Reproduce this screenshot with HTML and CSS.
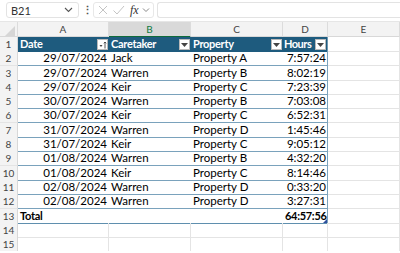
FILE: index.html
```html
<!DOCTYPE html>
<html lang="en">
<head>
  <meta charset="UTF-8" />
  <title>Caretaker Hours</title>
  <link rel="stylesheet" href="styles.css">
</head>
<body>

  <!-- Formula bar -->
  <div class="formula-bar">
    <div class="name-box">
      <span>B21</span>
      <svg width="9" height="6" viewBox="0 0 9 6"><path d="M1 1 L4.5 4.5 L8 1" fill="none" stroke="#555" stroke-width="1.1"/></svg>
    </div>
    <div class="dots">⋮</div>
    <div class="fx-box">
      <svg width="12" height="12" viewBox="0 0 12 12"><path d="M2 2 L10 10 M10 2 L2 10" stroke="#c4c4c4" stroke-width="1"/></svg>
      <svg width="13" height="12" viewBox="0 0 13 12"><path d="M1.5 6.5 L5 10 L12 2" fill="none" stroke="#c4c4c4" stroke-width="1"/></svg>
      <span class="fx">fx</span>
      <svg width="8" height="6" viewBox="0 0 8 6"><path d="M1 1.5 L4 4.5 L7 1.5" fill="none" stroke="#888" stroke-width="1"/></svg>
    </div>
    <div class="formula-input"></div>
  </div>

  <!-- Sheet -->
  <div class="sheet">
    <div class="row col-heads">
      <div class="corner"><svg width="10" height="10" viewBox="0 0 10 10"><path d="M10 0 L10 10 L0 10 Z" fill="#d6d6d6"/></svg></div>
      <div class="col-head">A</div>
      <div class="col-head selected">B</div>
      <div class="col-head">C</div>
      <div class="col-head">D</div>
      <div class="col-head">E</div>
    </div>

    <div class="row">
      <div class="row-head">1</div>
      <div class="cell th">Date<span class="filter sort"><svg width="8" height="8" viewBox="0 0 8 8"><path d="M0.5 4 L3.5 4 L2 6 Z" fill="#444"/><path d="M6 1 L6 7.5 M4.8 2.3 L6 1 L7.2 2.3" fill="none" stroke="#444" stroke-width="0.9"/></svg></span></div>
      <div class="cell th">Caretaker<span class="filter"><svg width="7" height="4" viewBox="0 0 7 4"><path d="M0 0 L7 0 L3.5 4 Z" fill="#444"/></svg></span></div>
      <div class="cell th">Property<span class="filter"><svg width="7" height="4" viewBox="0 0 7 4"><path d="M0 0 L7 0 L3.5 4 Z" fill="#444"/></svg></span></div>
      <div class="cell th th-last">Hours<span class="filter"><svg width="7" height="4" viewBox="0 0 7 4"><path d="M0 0 L7 0 L3.5 4 Z" fill="#444"/></svg></span></div>
      <div class="cell"></div>
    </div>

    <div id="rows"></div>

    <div class="row total-row">
      <div class="row-head">13</div>
      <div class="cell td bold">Total</div>
      <div class="cell td"></div>
      <div class="cell td"></div>
      <div class="cell td num bold last">64:57:56<span class="handle"></span></div>
      <div class="cell"></div>
    </div>

    <div class="row">
      <div class="row-head">14</div>
      <div class="cell"></div><div class="cell"></div><div class="cell"></div><div class="cell"></div><div class="cell"></div>
    </div>
    <div class="row">
      <div class="row-head">15</div>
      <div class="cell"></div><div class="cell"></div><div class="cell"></div><div class="cell"></div><div class="cell"></div>
    </div>
  </div>

  <script>
    const data = [
      ['29/07/2024', 'Jack', 'Property A', '7:57:24'],
      ['29/07/2024', 'Warren', 'Property B', '8:02:19'],
      ['29/07/2024', 'Keir', 'Property C', '7:23:39'],
      ['30/07/2024', 'Warren', 'Property B', '7:03:08'],
      ['30/07/2024', 'Keir', 'Property C', '6:52:31'],
      ['31/07/2024', 'Warren', 'Property D', '1:45:46'],
      ['31/07/2024', 'Keir', 'Property C', '9:05:12'],
      ['01/08/2024', 'Warren', 'Property B', '4:32:20'],
      ['01/08/2024', 'Keir', 'Property C', '8:14:46'],
      ['02/08/2024', 'Warren', 'Property D', '0:33:20'],
      ['02/08/2024', 'Warren', 'Property D', '3:27:31']
    ];

    const rowsEl = document.getElementById('rows');
    data.forEach((r, i) => {
      const row = document.createElement('div');
      row.className = 'row';
      row.innerHTML =
        '<div class="row-head">' + (i + 2) + '</div>' +
        '<div class="cell td num">' + r[0] + '</div>' +
        '<div class="cell td">' + r[1] + '</div>' +
        '<div class="cell td">' + r[2] + '</div>' +
        '<div class="cell td num last">' + r[3] + '</div>' +
        '<div class="cell"></div>';
      rowsEl.appendChild(row);
    });
  </script>

</body>
</html>
```

FILE: styles.css
```css
/* Page */
html, body {
  margin: 0;
  padding: 0;
  background: #ffffff;
  font-family: Lato, "Liberation Sans", sans-serif;
  font-size: 11.5px;
  color: #000;
  overflow: hidden;
}

/* Formula bar */
.formula-bar {
  display: flex;
  align-items: center;
  height: 20px;
  padding: 0 0 0 6px;
  gap: 3px;
  background: #ffffff;
}
.name-box {
  display: flex;
  align-items: center;
  justify-content: space-between;
  width: 62px;
  height: 14px;
  padding: 0 5px 0 4px;
  border: 1px solid #e3e3e3;
  border-radius: 3px;
  font-size: 11px;
  color: #333;
}
.dots {
  width: 8px;
  text-align: center;
  color: #555;
  font-size: 11px;
  font-weight: bold;
}
.fx-box {
  display: flex;
  align-items: center;
  gap: 3px;
  width: 54px;
  height: 14px;
  padding: 0 2px 0 3px;
  border: 1px solid #e8e8e8;
  border-radius: 3px;
}
.fx {
  font-family: "Liberation Serif", serif;
  font-style: italic;
  font-size: 12px;
  color: #333;
  margin-left: 2px;
}
.formula-input {
  flex: 1;
  height: 14px;
  border: 1px solid #e3e3e3;
  border-right: none;
  border-radius: 3px 0 0 3px;
}

/* Sheet grid */
.sheet {
  margin-top: 1px;
  border-top: 1px solid #e6e6e6;
}
.row {
  display: grid;
  grid-template-columns: 18px 91px 82px 92px 45px 1fr;
  height: 14.3px;
}
.col-heads {
  height: 14px;
  background: #f3f3f3;
  border-bottom: 1px solid #d8d8d8;
}
.corner {
  display: flex;
  align-items: flex-end;
  justify-content: flex-end;
  padding: 0 2px 2px 0;
  border-right: 1px solid #dcdcdc;
}
.col-head {
  text-align: center;
  color: #444;
  font-size: 10px;
  line-height: 14px;
  border-right: 1px solid #dcdcdc;
}
.col-head.selected {
  background: #d9d9d9;
  color: #0f7b3f;
  border-bottom: 2px solid #0f6b3a;
  line-height: 14px;
}
.row-head {
  background: #f3f3f3;
  color: #444;
  font-size: 10px;
  text-align: center;
  line-height: 14px;
  border-right: 1px solid #d8d8d8;
  border-bottom: 1px solid #e4e4e4;
  box-sizing: border-box;
}

/* Cells */
.cell {
  position: relative;
  border-right: 1px solid #e4e4e4;
  border-bottom: 1px solid #e4e4e4;
  box-sizing: border-box;
  padding: 0 2px;
  line-height: 14px;
  white-space: nowrap;
  overflow: hidden;
}
.th {
  background: #1e5b7e;
  color: #fff;
  font-weight: bold;
  font-size: 11px;
  letter-spacing: -0.3px;
  border-right: none;
  border-bottom: 1px solid #1e5b7e;
}
.th-last {
  border-right: 1px solid #6f97b1;
  padding-left: 1px;
  letter-spacing: -0.5px;
}
.filter {
  position: absolute;
  right: 1px;
  top: 2px;
  width: 9px;
  height: 9px;
  background: #fff;
  border: 1px solid #b9b9b9;
  display: flex;
  align-items: center;
  justify-content: center;
}
.td {
  border-right: none;
  border-bottom: 1px solid #7aa2bc;
}
.td.last {
  border-right: 1px solid #7aa2bc;
  padding-right: 1px;
}
.num {
  text-align: right;
}
.bold {
  font-weight: bold;
  font-size: 11px;
  letter-spacing: -0.3px;
}
.total-row .td {
  border-bottom: 1px solid #5f8fae;
}
.handle {
  position: absolute;
  right: 0;
  bottom: 0;
  width: 0;
  height: 0;
  border-left: 4px solid transparent;
  border-bottom: 4px solid #2f4f9e;
}
```
